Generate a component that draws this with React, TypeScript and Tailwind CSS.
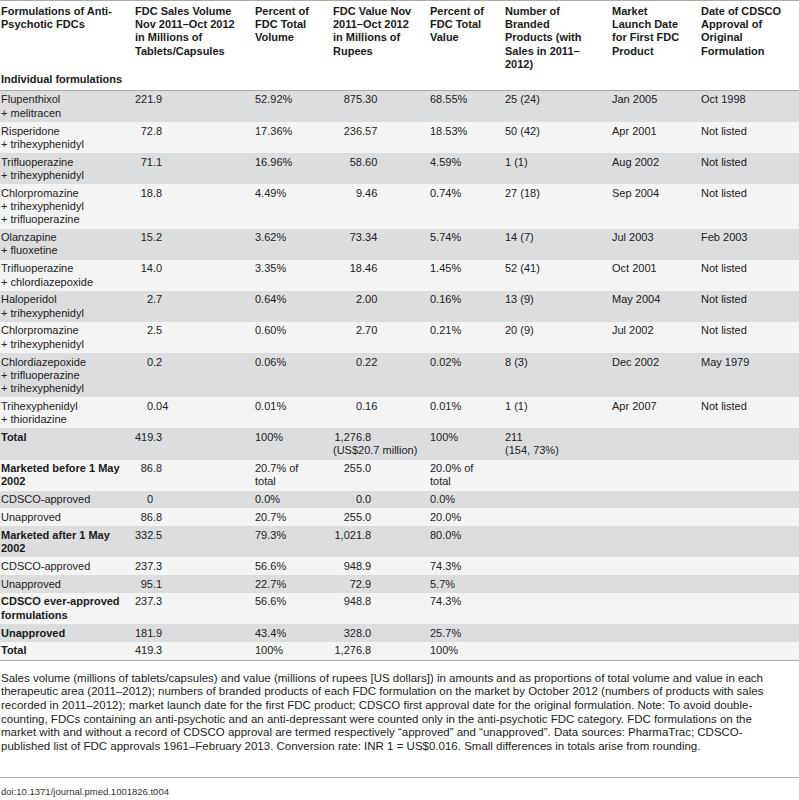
import React from 'react';

type Row = {
  name: React.ReactNode;
  bold?: boolean;
  vol: string;
  volPct: string;
  val: string;
  valNote?: string;
  valPct: string;
  brands?: React.ReactNode;
  launch?: string;
  approval?: string;
};

const rows: Row[] = [
  { name: <>Flupenthixol<br />+ melitracen</>, vol: '221.9', volPct: '52.92%', val: '875.30', valPct: '68.55%', brands: '25 (24)', launch: 'Jan 2005', approval: 'Oct 1998' },
  { name: <>Risperidone<br />+ trihexyphenidyl</>, vol: '72.8', volPct: '17.36%', val: '236.57', valPct: '18.53%', brands: '50 (42)', launch: 'Apr 2001', approval: 'Not listed' },
  { name: <>Trifluoperazine<br />+ trihexyphenidyl</>, vol: '71.1', volPct: '16.96%', val: '58.60', valPct: '4.59%', brands: '1 (1)', launch: 'Aug 2002', approval: 'Not listed' },
  { name: <>Chlorpromazine<br />+ trihexyphenidyl<br />+ trifluoperazine</>, vol: '18.8', volPct: '4.49%', val: '9.46', valPct: '0.74%', brands: '27 (18)', launch: 'Sep 2004', approval: 'Not listed' },
  { name: <>Olanzapine<br />+ fluoxetine</>, vol: '15.2', volPct: '3.62%', val: '73.34', valPct: '5.74%', brands: '14 (7)', launch: 'Jul 2003', approval: 'Feb 2003' },
  { name: <>Trifluoperazine<br />+ chlordiazepoxide</>, vol: '14.0', volPct: '3.35%', val: '18.46', valPct: '1.45%', brands: '52 (41)', launch: 'Oct 2001', approval: 'Not listed' },
  { name: <>Haloperidol<br />+ trihexyphenidyl</>, vol: '2.7', volPct: '0.64%', val: '2.00', valPct: '0.16%', brands: '13 (9)', launch: 'May 2004', approval: 'Not listed' },
  { name: <>Chlorpromazine<br />+ trihexyphenidyl</>, vol: '2.5', volPct: '0.60%', val: '2.70', valPct: '0.21%', brands: '20 (9)', launch: 'Jul 2002', approval: 'Not listed' },
  { name: <>Chlordiazepoxide<br />+ trifluoperazine<br />+ trihexyphenidyl</>, vol: '0.2', volPct: '0.06%', val: '0.22', valPct: '0.02%', brands: '8 (3)', launch: 'Dec 2002', approval: 'May 1979' },
  { name: <>Trihexyphenidyl<br />+ thioridazine</>, vol: '0.04', volPct: '0.01%', val: '0.16', valPct: '0.01%', brands: '1 (1)', launch: 'Apr 2007', approval: 'Not listed' },
  { name: 'Total', bold: true, vol: '419.3', volPct: '100%', val: '1,276.8', valNote: '(US$20.7 million)', valPct: '100%', brands: <>211<br />(154, 73%)</> },
  { name: 'Marketed before 1 May 2002', bold: true, vol: '86.8', volPct: '20.7% of total', val: '255.0', valPct: '20.0% of total' },
  { name: 'CDSCO-approved', vol: '0', volPct: '0.0%', val: '0.0', valPct: '0.0%' },
  { name: 'Unapproved', vol: '86.8', volPct: '20.7%', val: '255.0', valPct: '20.0%' },
  { name: 'Marketed after 1 May 2002', bold: true, vol: '332.5', volPct: '79.3%', val: '1,021.8', valPct: '80.0%' },
  { name: 'CDSCO-approved', vol: '237.3', volPct: '56.6%', val: '948.9', valPct: '74.3%' },
  { name: 'Unapproved', vol: '95.1', volPct: '22.7%', val: '72.9', valPct: '5.7%' },
  { name: 'CDSCO ever-approved formulations', bold: true, vol: '237.3', volPct: '56.6%', val: '948.8', valPct: '74.3%' },
  { name: 'Unapproved', bold: true, vol: '181.9', volPct: '43.4%', val: '328.0', valPct: '25.7%' },
  { name: 'Total', bold: true, vol: '419.3', volPct: '100%', val: '1,276.8', valPct: '100%' },
];

// numbers lined up on the decimal point: integer part sits in a right-aligned box
const Dec = ({ v, w }: { v: string; w: string }) => {
  const i = v.indexOf('.');
  const int = i < 0 ? v : v.slice(0, i);
  const rest = i < 0 ? '' : v.slice(i);
  return (
    <span className="whitespace-nowrap">
      <span className={`inline-block text-right ${w}`}>{int}</span>
      {rest}
    </span>
  );
};

const td = 'align-top pt-[2.5px] pb-[2px] text-left';

export default function App() {
  return (
    <div
      className="w-[799px] bg-white text-[#222] text-[11px] leading-[13.3px]"
      style={{ fontFamily: '"Liberation Sans", Arial, sans-serif' }}
    >
      <table className="table-fixed border-collapse w-[799px] border-t border-[#aaa]">
        <colgroup>
          <col className="w-[135px]" />
          <col className="w-[120px]" />
          <col className="w-[78px]" />
          <col className="w-[97px]" />
          <col className="w-[75px]" />
          <col className="w-[107px]" />
          <col className="w-[89px]" />
          <col className="w-[98px]" />
        </colgroup>
        <thead>
          <tr className="font-bold text-[#1a1a1a]">
            <th className="align-top text-left pt-[3.7px] pl-[1px] pr-[8px]">Formulations of Anti-Psychotic FDCs</th>
            <th className="align-top text-left pt-[3.7px] pr-[14px]">FDC Sales Volume Nov 2011–Oct 2012 in Millions of Tablets/Capsules</th>
            <th className="align-top text-left pt-[3.7px] pr-[18px]">Percent of FDC Total Volume</th>
            <th className="align-top text-left pt-[3.7px] pr-[12px]">FDC Value Nov 2011–Oct 2012 in Millions of Rupees</th>
            <th className="align-top text-left pt-[3.7px] pr-[15px]">Percent of FDC Total Value</th>
            <th className="align-top text-left pt-[3.7px] pr-[22px]">Number of Branded Products (with Sales in 2011–2012)</th>
            <th className="align-top text-left pt-[3.7px] pr-[17px]">Market Launch Date for First FDC Product</th>
            <th className="align-top text-left pt-[3.7px] pr-[6px]">Date of CDSCO Approval of Original Formulation</th>
          </tr>
          <tr>
            <th colSpan={8} className="text-left font-bold text-[#1a1a1a] pl-[1px] pt-[2.2px] pb-[3.3px]">
              Individual formulations
            </th>
          </tr>
        </thead>
        <tbody>
          {rows.map((r, idx) => (
            <tr
              key={idx}
              className={`${idx % 2 === 0 ? 'bg-[#dcdddf]' : 'bg-[#f4f4f4]'} ${idx === 0 ? 'border-t border-[#aaa]' : ''}`}
            >
              <td className={`${td} pl-[1px] pr-[8px] ${r.bold ? 'font-bold text-[#1a1a1a]' : ''}`}>{r.name}</td>
              <td className={`${td} pr-[14px]`}><Dec v={r.vol} w="w-[18px]" /></td>
              <td className={`${td} pr-[18px]`}>{r.volPct}</td>
              <td className={`${td} pr-[6px]`}>
                <Dec v={r.val} w="w-[29px]" />
                {r.valNote && <div>{r.valNote}</div>}
              </td>
              <td className={`${td} pr-[15px]`}>{r.valPct}</td>
              <td className={`${td} pr-[22px]`}>{r.brands}</td>
              <td className={`${td} pr-[17px]`}>{r.launch}</td>
              <td className={`${td} pr-[6px]`}>{r.approval}</td>
            </tr>
          ))}
        </tbody>
      </table>
      <div className="border-t border-[#aaa]">
        <p className="pt-[11px] pb-[23px] pl-[1px] pr-[10px] text-[11.5px] leading-[13.7px] border-b border-[#bbb]">
          Sales volume (millions of tablets/capsules) and value (millions of rupees [US dollars]) in amounts and as proportions of total volume and value in each therapeutic area (2011–2012); numbers of branded products of each FDC formulation on the market by October 2012 (numbers of products with sales recorded in 2011–2012); market launch date for the first FDC product; CDSCO first approval date for the original formulation. Note: To avoid double-counting, FDCs containing an anti-psychotic and an anti-depressant were counted only in the anti-psychotic FDC category. FDC formulations on the market with and without a record of CDSCO approval are termed respectively “approved” and “unapproved”. Data sources: PharmaTrac; CDSCO-published list of FDC approvals 1961–February 2013. Conversion rate: INR 1 = US$0.016. Small differences in totals arise from rounding.
        </p>
        <p className="pt-[8px] pl-[1px] text-[9.5px] leading-[12px] text-[#333]">doi:10.1371/journal.pmed.1001826.t004</p>
      </div>
    </div>
  );
}
